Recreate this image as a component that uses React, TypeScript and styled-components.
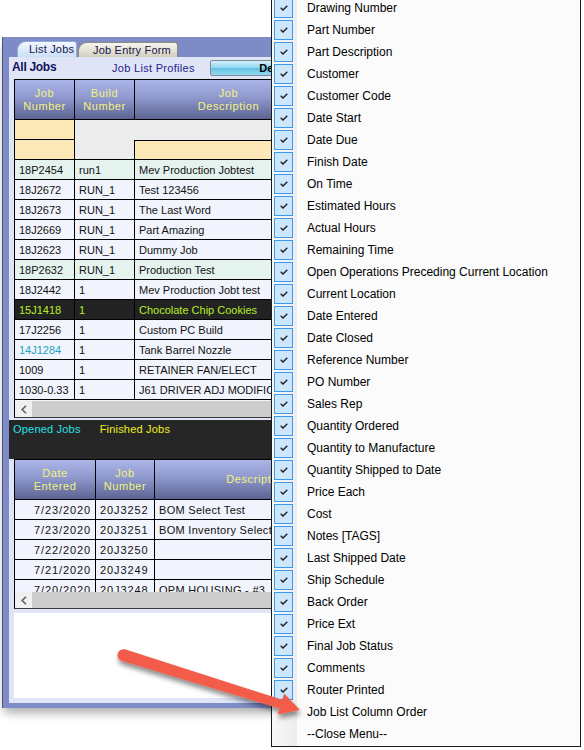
import React from 'react';
import styled, { createGlobalStyle } from 'styled-components';

const GlobalStyle = createGlobalStyle`
  html, body {
    margin: 0;
    padding: 0;
    background: #ffffff;
  }
  body {
    font-family: "Liberation Sans", Arial, sans-serif;
  }
`;

const Page = styled.div`
  position: relative;
  width: 584px;
  height: 750px;
  overflow: hidden;
  background: #fff;
`;

/* ---------- the form window ---------- */

const Window = styled.div`
  box-sizing: border-box;
  margin: 37px 0 0 2px;
  width: 560px;
  height: 671px;
  display: flex;
  flex-direction: column;
  padding: 0 0 5px 6px;
  background: #7d8cc6;
  border-left: 1px solid #4e5576;
  box-shadow: 0 7px 9px -2px rgba(0, 0, 0, 0.32);
`;

const TabStrip = styled.div`
  height: 20px;
  display: flex;
  align-items: flex-end;
  padding-left: 8px;
`;

const Tab = styled.div<{ $active?: boolean; $w: number }>`
  box-sizing: border-box;
  width: ${p => p.$w}px;
  height: ${p => (p.$active ? 16 : 15)}px;
  margin-right: 1px;
  padding-left: ${p => (p.$active ? 11 : 14)}px;
  font-size: 11px;
  line-height: 15px;
  letter-spacing: 0.2px;
  color: #16164a;
  border: 1px solid ${p => (p.$active ? '#93acd8' : '#8e8b7c')};
  border-bottom: none;
  border-radius: 9px 3px 0 0;
  background: ${p =>
    p.$active
      ? 'linear-gradient(#f2f7fe, #cadff7)'
      : 'linear-gradient(#f7f5ee, #d3cfbf)'};
`;

const Panel = styled.div`
  flex: 1;
  display: flex;
  flex-direction: column;
  background: #dfe5f7;
  padding-bottom: 5px;
`;

const TopBar = styled.div`
  height: 22px;
  display: flex;
  align-items: center;
  padding-left: 3px;
`;

const AllJobs = styled.div`
  width: 100px;
  font-size: 12px;
  font-weight: bold;
  letter-spacing: -0.3px;
  color: #12125a;
  margin-top: -2px;
`;

const ProfilesLabel = styled.div`
  width: 98px;
  font-size: 11px;
  letter-spacing: 0.3px;
  color: #24228e;
`;

const ProfileButton = styled.div`
  box-sizing: border-box;
  width: 136px;
  height: 16px;
  border: 1px solid #7c8a98;
  border-radius: 2px;
  background: linear-gradient(#d6f1fa, #8fd6ee 48%, #62c2e2 52%, #93d9ef);
  font-size: 11px;
  font-weight: bold;
  line-height: 14px;
  text-align: center;
  color: #000;
`;

/* ---------- grids ---------- */

const TableFrame = styled.div`
  margin-left: 5px;
  width: 520px;
  border-left: 1px solid #000;
  border-top: 1px solid #000;
  border-bottom: 1px solid #3a3a3a;
  background: #f1f4fc;
`;

const Row = styled.div`
  display: flex;
  height: 20px;
`;

const HeadRow = styled.div`
  display: flex;
  height: 40px;
  background: linear-gradient(#abb5e8, #8e98cc 45%, #59618f);
`;

const HeadCell = styled.div<{ $w: number }>`
  box-sizing: border-box;
  width: ${p => p.$w}px;
  flex-shrink: 0;
  display: flex;
  align-items: center;
  justify-content: center;
  text-align: center;
  font-size: 11px;
  line-height: 13px;
  letter-spacing: 0.6px;
  color: #f3f37c;
  border-right: 1px solid #000;
  border-bottom: 1px solid #000;
`;

type Variant = 'normal' | 'teal' | 'dark';

const Cell = styled.div<{ $w: number; $variant?: Variant; $color?: string; $right?: boolean }>`
  box-sizing: border-box;
  width: ${p => p.$w}px;
  flex-shrink: 0;
  height: 20px;
  padding: 0 4px;
  font-size: 11px;
  line-height: 20px;
  white-space: nowrap;
  overflow: hidden;
  text-align: ${p => (p.$right ? 'right' : 'left')};
  border-right: 1px solid #000;
  border-bottom: 1px solid #000;
  background: ${p =>
    p.$variant === 'dark' ? '#222222' : p.$variant === 'teal' ? '#e5f3ef' : '#f1f4fc'};
  color: ${p => p.$color ?? (p.$variant === 'dark' ? '#b9ee22' : '#111')};
`;

const FilterGrid = styled.div`
  display: grid;
  grid-template-columns: 60px 60px 400px;
  grid-template-rows: 20px 20px;
`;

const FilterCell = styled.div<{ $tone: 'peach' | 'grey'; $borders: string; $span?: boolean }>`
  box-sizing: border-box;
  grid-column: ${p => (p.$span ? '2 / 4' : 'auto')};
  background: ${p => (p.$tone === 'peach' ? '#fde8b7' : '#ececec')};
  border-style: solid;
  border-color: #000;
  border-width: ${p => p.$borders};
`;

const Rows = styled.div<{ $h: number }>`
  height: ${p => p.$h}px;
  overflow: hidden;
`;

const Scrollbar = styled.div`
  display: flex;
  height: 16px;
  background: #cdcdcd;
`;

const ScrollButton = styled.div`
  width: 17px;
  display: flex;
  align-items: center;
  justify-content: center;
  background: #f0f0f0;
`;

const DarkBar = styled.div`
  height: 39px;
  margin-top: 2px;
  display: flex;
  align-items: flex-start;
  padding: 3px 0 0 4px;
  box-sizing: border-box;
  background: #262626;
  font-size: 11px;
  gap: 19px;
`;

const BarLabel = styled.span<{ $color: string }>`
  color: ${p => p.$color};
  letter-spacing: 0.2px;
`;

const Wide = styled.div<{ $spacing?: number }>`
  letter-spacing: ${p => p.$spacing ?? 0.9}px;
`;

const NoteBox = styled.div`
  margin: 4px 0 0 5px;
  height: 85px;
  background: #ffffff;
`;

/* ---------- context menu ---------- */

const Menu = styled.div`
  position: absolute;
  left: 271px;
  top: -6px;
  width: 310px;
  box-sizing: border-box;
  border: 1px solid #1a1a1a;
  padding: 2px 0 1px;
  background: linear-gradient(to right, #f9f9f9 0, #ececec 25px, #fbfbfb 25px);
  z-index: 2;
`;

const MenuItem = styled.div`
  height: 22px;
  display: flex;
  align-items: center;
  padding-left: 2px;
  font-size: 12px;
  color: #000;
  white-space: nowrap;
`;

const CheckBox = styled.div<{ $on: boolean }>`
  box-sizing: border-box;
  width: 19px;
  height: 20px;
  margin-right: 14px;
  display: flex;
  align-items: center;
  justify-content: center;
  border: 1px solid ${p => (p.$on ? '#3d98ee' : 'transparent')};
  background: ${p => (p.$on ? '#cce6fd' : 'transparent')};
`;

const Overlay = styled.svg`
  position: absolute;
  left: 0;
  top: 0;
  z-index: 3;
  pointer-events: none;
`;

/* ---------- data ---------- */

const jobs: { job: string; build: string; desc: string; variant?: Variant; color?: string }[] = [
  { job: '18P2454', build: 'run1', desc: 'Mev Production Jobtest', variant: 'teal' },
  { job: '18J2672', build: 'RUN_1', desc: 'Test 123456' },
  { job: '18J2673', build: 'RUN_1', desc: 'The Last Word' },
  { job: '18J2669', build: 'RUN_1', desc: 'Part Amazing' },
  { job: '18J2623', build: 'RUN_1', desc: 'Dummy Job' },
  { job: '18P2632', build: 'RUN_1', desc: 'Production Test', variant: 'teal' },
  { job: '18J2442', build: '1', desc: 'Mev Production Jobt test' },
  { job: '15J1418', build: '1', desc: 'Chocolate Chip Cookies', variant: 'dark' },
  { job: '17J2256', build: '1', desc: 'Custom PC Build' },
  { job: '14J1284', build: '1', desc: 'Tank Barrel Nozzle', color: '#1ea2c3' },
  { job: '1009', build: '1', desc: 'RETAINER FAN/ELECT' },
  { job: '1030-0.33', build: '1', desc: 'J61 DRIVER ADJ MODIFICATION' },
];

const opened = [
  ['7/23/2020', '20J3252', 'BOM Select Test'],
  ['7/23/2020', '20J3251', 'BOM Inventory Select'],
  ['7/22/2020', '20J3250', ''],
  ['7/21/2020', '20J3249', ''],
  ['7/20/2020', '20J3248', 'OPM HOUSING - #3'],
];

const columns = [
  'Drawing Number', 'Part Number', 'Part Description', 'Customer', 'Customer Code',
  'Date Start', 'Date Due', 'Finish Date', 'On Time', 'Estimated Hours', 'Actual Hours',
  'Remaining Time', 'Open Operations Preceding Current Location', 'Current Location',
  'Date Entered', 'Date Closed', 'Reference Number', 'PO Number', 'Sales Rep',
  'Quantity Ordered', 'Quantity to Manufacture', 'Quantity Shipped to Date', 'Price Each',
  'Cost', 'Notes [TAGS]', 'Last Shipped Date', 'Ship Schedule', 'Back Order', 'Price Ext',
  'Final Job Status', 'Comments', 'Router Printed',
];

const Check = () => (
  <svg width="8" height="6" viewBox="0 0 8 6">
    <polyline points="0.7,2.8 3,5 7.3,0.8" fill="none" stroke="#1b1b1b" strokeWidth="1.3" />
  </svg>
);

const LeftArrow = () => (
  <svg width="6" height="9" viewBox="0 0 6 9">
    <polyline points="5,0.8 1.2,4.5 5,8.2" fill="none" stroke="#5f5f5f" strokeWidth="1.6" />
  </svg>
);

const HScroll = () => (
  <Scrollbar>
    <ScrollButton>
      <LeftArrow />
    </ScrollButton>
  </Scrollbar>
);

// arrow drawn from the tail toward the menu entry
const arrowPath =
  'M 124.8 649.3 L 282.2 699.8 L 284.2 693.6 L 300 710 L 277.6 714.6 L 279.6 708.4 L 121.2 660.7 A 6 6 0 0 1 124.8 649.3 Z';

export default function App() {
  return (
    <Page>
      <GlobalStyle />
      <Window>
        <TabStrip>
          <Tab $active $w={60}>List Jobs</Tab>
          <Tab $w={100}>Job Entry Form</Tab>
        </TabStrip>
        <Panel>
          <TopBar>
            <AllJobs>All Jobs</AllJobs>
            <ProfilesLabel>Job List Profiles</ProfilesLabel>
            <ProfileButton>Default</ProfileButton>
          </TopBar>

          <TableFrame>
            <HeadRow>
              <HeadCell $w={60}>Job<br />Number</HeadCell>
              <HeadCell $w={60}>Build<br />Number</HeadCell>
              <HeadCell $w={188}>Job<br />Description</HeadCell>
            </HeadRow>
            <Rows $h={281}>
              <FilterGrid>
                <FilterCell $tone="peach" $borders="0 1px 1px 0" />
                <FilterCell $tone="grey" $borders="0" $span />
                <FilterCell $tone="peach" $borders="0 1px 1px 0" />
                <FilterCell $tone="grey" $borders="0 1px 1px 0" />
                <FilterCell $tone="peach" $borders="1px 0 1px 0" />
              </FilterGrid>
              {jobs.map(r => (
                <Row key={r.job}>
                  <Cell $w={60} $variant={r.variant} $color={r.color}>{r.job}</Cell>
                  <Cell $w={60} $variant={r.variant}>{r.build}</Cell>
                  <Cell $w={188} $variant={r.variant}>{r.desc}</Cell>
                  <Cell $w={120} $variant={r.variant} />
                </Row>
              ))}
            </Rows>
            <HScroll />
          </TableFrame>

          <DarkBar>
            <BarLabel $color="#22e1e4">Opened Jobs</BarLabel>
            <BarLabel $color="#eef01e">Finished Jobs</BarLabel>
          </DarkBar>

          <TableFrame>
            <HeadRow>
              <HeadCell $w={81}>Date<br />Entered</HeadCell>
              <HeadCell $w={59}>Job<br />Number</HeadCell>
              <HeadCell $w={205}>Description</HeadCell>
            </HeadRow>
            <Rows $h={92}>
              {opened.map(([d, j, desc]) => (
                <Row key={j}>
                  <Cell $w={81} $right><Wide>{d}</Wide></Cell>
                  <Cell $w={59}><Wide>{j}</Wide></Cell>
                  <Cell $w={205}><Wide $spacing={0.3}>{desc}</Wide></Cell>
                </Row>
              ))}
            </Rows>
            <HScroll />
          </TableFrame>

          <NoteBox />
        </Panel>
      </Window>

      <Menu>
        {columns.map(c => (
          <MenuItem key={c}>
            <CheckBox $on>
              <Check />
            </CheckBox>
            {c}
          </MenuItem>
        ))}
        <MenuItem>
          <CheckBox $on={false} />
          Job List Column Order
        </MenuItem>
        <MenuItem>
          <CheckBox $on={false} />
          --Close Menu--
        </MenuItem>
      </Menu>

      <Overlay width="584" height="750" viewBox="0 0 584 750">
        <defs>
          <filter id="arrowShadow" x="-10%" y="-30%" width="130%" height="180%">
            <feDropShadow dx="1" dy="4" stdDeviation="2.5" floodColor="#000" floodOpacity="0.45" />
          </filter>
        </defs>
        <path d={arrowPath} fill="#f25b4a" filter="url(#arrowShadow)" />
      </Overlay>
    </Page>
  );
}
